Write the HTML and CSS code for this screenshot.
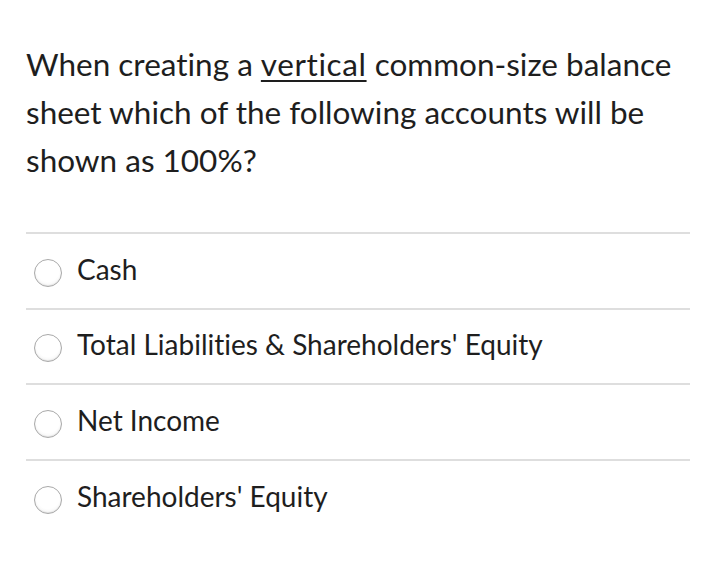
FILE: index.html
```html
<!DOCTYPE html>
<html>
<head>
<meta charset="utf-8">
<link rel="stylesheet" href="styles.css">
</head>
<body>
<div class="page">
  <p class="question">When creating a <u>vertical</u> common-size balance sheet which of the following accounts will be shown as 100%?</p>
  <ul class="options">
    <li class="option"><span class="radio"></span><span class="label">Cash</span></li>
    <li class="option"><span class="radio"></span><span class="label">Total Liabilities &amp; Shareholders' Equity</span></li>
    <li class="option"><span class="radio"></span><span class="label">Net Income</span></li>
    <li class="option last"><span class="radio"></span><span class="label">Shareholders' Equity</span></li>
  </ul>
</div>
</body>
</html>
```
FILE: styles.css
```css
html, body {
  margin: 0;
  padding: 0;
  background: #fff;
}
.page {
  padding: 40px 14px 0 26px;
  font-family: Lato, "Liberation Sans", sans-serif;
  font-variant-ligatures: none;
  color: #1e1e1e;
}
.question {
  margin: 0;
  font-size: 31.5px;
  line-height: 48px;
  width: 664px;
}
.question u {
  text-decoration-thickness: 2px;
  text-underline-offset: 4px;
  letter-spacing: 0.6px;
}
.options {
  list-style: none;
  margin: 48px 0 0 0;
  padding: 0;
}
.option {
  display: flex;
  align-items: center;
  height: 73.67px;
  border-top: 2px solid #dedede;
  padding-left: 8px;
}
.radio {
  width: 26px;
  height: 26px;
  border: 1px solid #a9a9a9;
  border-radius: 50%;
  background: radial-gradient(circle at 50% 40%, #fff 55%, #ececec 100%);
  box-shadow: inset 0 -1px 1px rgba(0,0,0,0.08);
  flex: none;
  margin-top: 4px;
}
.label {
  margin-left: 15px;
  font-size: 28px;
  line-height: 36px;
  margin-bottom: 4px;
}
```
